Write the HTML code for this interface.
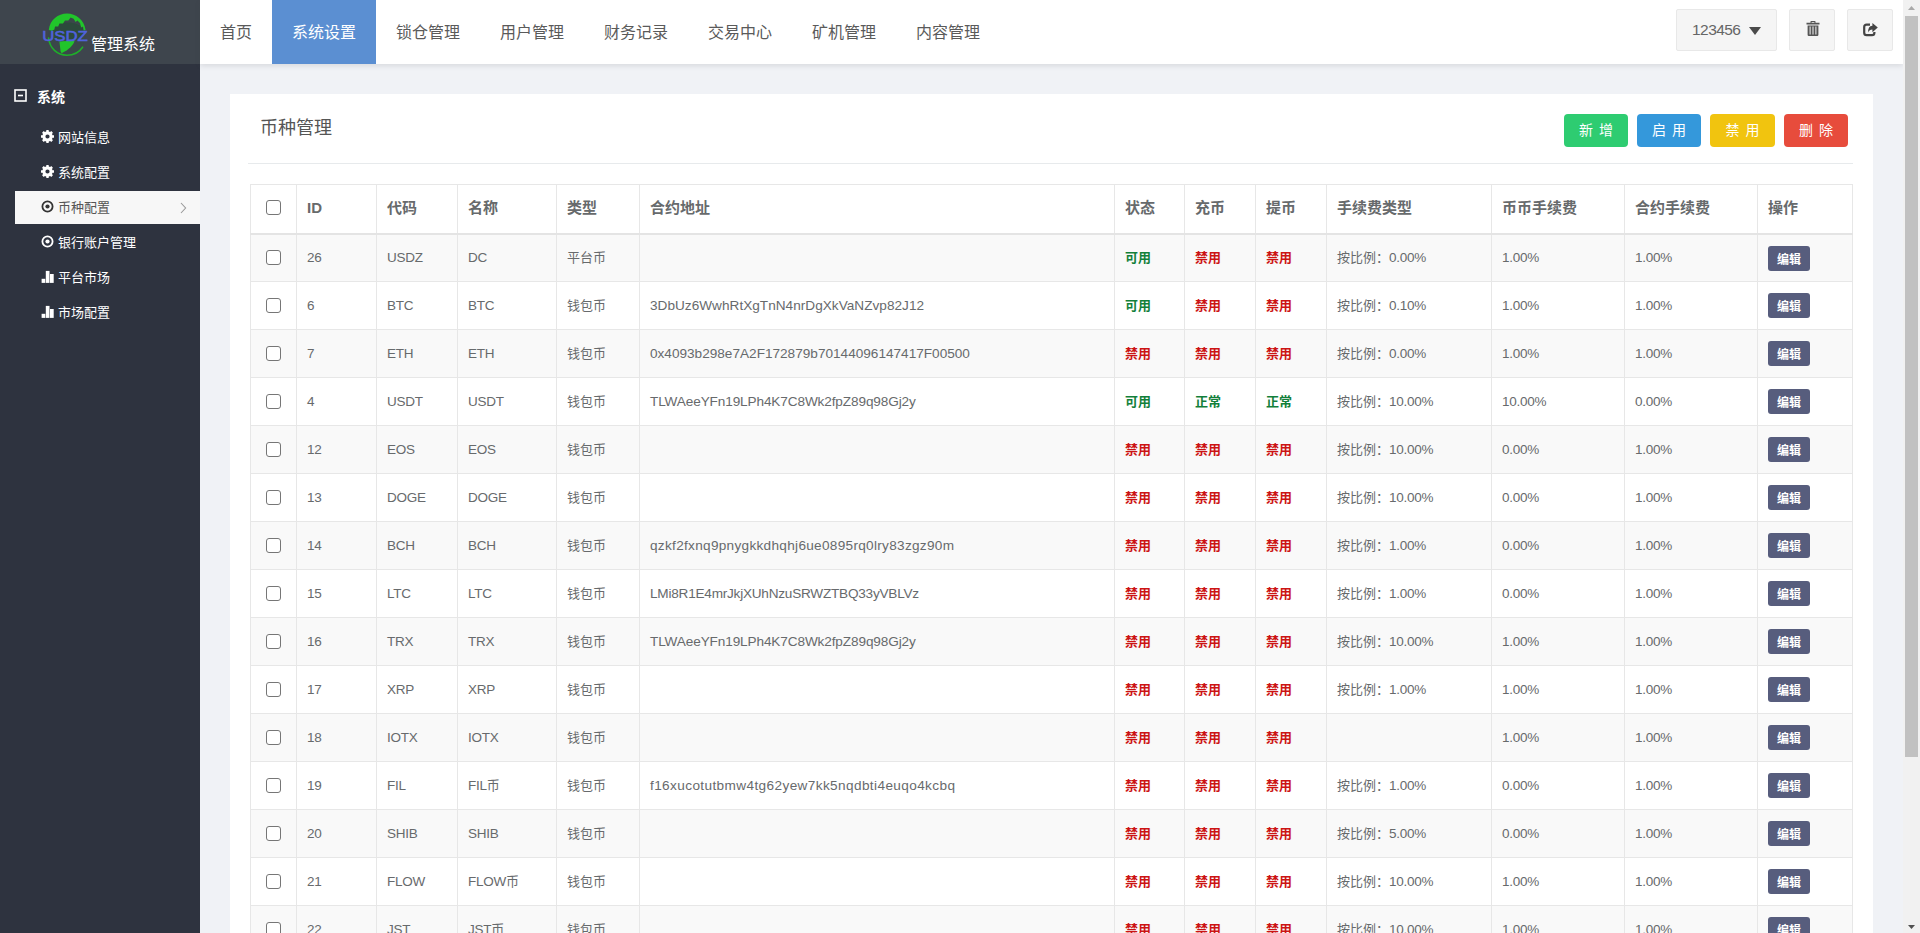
<!DOCTYPE html>
<html lang="zh-CN">
<head>
<meta charset="utf-8">
<title>管理系统</title>
<style>
*{box-sizing:border-box;}
html,body{margin:0;padding:0;}
body{width:1920px;height:933px;overflow:hidden;background:#f0f2f6;font-family:"Liberation Sans","Noto Sans CJK SC",sans-serif;font-size:14px;color:#676a6c;position:relative;}
#side{position:absolute;left:0;top:0;width:200px;height:933px;background:#2e333f;}
#logo{position:absolute;left:0;top:0;width:200px;height:64px;background:#3e454d;}
#logo .t{position:absolute;left:91px;top:33px;font-size:16px;line-height:24px;color:#fff;white-space:nowrap;}
#top{position:absolute;left:200px;top:0;width:1703px;height:64px;background:#fff;box-shadow:0 2px 5px rgba(60,60,70,.13);}
#top .nav{position:absolute;left:0;top:0;height:64px;display:flex;}
#top .nav a{display:block;height:64px;line-height:66px;padding:0 20px;font-size:16px;color:#5a5a5a;text-decoration:none;white-space:nowrap;}
#top .nav a.on{background:#5b8fd2;color:#fff;}
.tb{position:absolute;top:9px;height:42px;background:#f5f5f5;border:1px solid #e8e8e8;border-radius:2px;}
.tb svg{position:absolute;}
#menu-h{position:absolute;left:37px;top:86px;font-size:14px;line-height:22px;font-weight:bold;color:#fff;}
.mi{position:absolute;left:15px;width:185px;height:33px;line-height:33px;color:#fff;font-size:13px;padding-left:43px;white-space:nowrap;}
.mi.on{background:#f7f7f7;color:#555;}
.mi svg{position:absolute;left:26px;top:9px;}
#sb{position:absolute;left:1903px;top:0;width:17px;height:933px;background:#f1f1f1;}
#sb .th{position:absolute;left:2px;top:16px;width:13px;height:741px;background:#c1c1c1;}
#sb svg{position:absolute;left:5px;top:6px;}
#card{position:absolute;left:230px;top:94px;width:1643px;height:860px;background:#fff;}
#card h2{position:absolute;left:30px;top:21px;margin:0;font-size:18px;line-height:26px;font-weight:normal;color:#555;}
.btn{position:absolute;top:20px;height:33px;line-height:33px;border-radius:4px;color:#fff;font-size:14px;text-align:center;white-space:nowrap;word-spacing:2px;}
#hr{position:absolute;left:18px;top:69px;width:1605px;height:1px;background:#e7eaec;}
table{position:absolute;left:20px;top:90px;width:1602px;border-collapse:collapse;table-layout:fixed;}
th,td{border:1px solid #e7e7e7;padding:0 0 0 10px;text-align:left;white-space:nowrap;overflow:hidden;font-size:13px;line-height:18px;}
td i{font-style:normal;font-size:13.5px;letter-spacing:-.25px;}
td i.a{font-size:13.6px;}
th{height:49px;padding-bottom:2px;border-bottom:2px solid #e4e4e4;font-weight:bold;color:#676a6c;font-size:15px;}
td{height:48px;}
tbody tr:nth-child(odd) td{background:#f9f9f9;}
td.ck,th.ck{padding-left:15px;}
.cb{display:inline-block;width:15px;height:15px;border:1px solid #767676;border-radius:3px;background:#fff;vertical-align:middle;position:relative;top:-1px;}
th .cb{top:-1px;}
tbody tr:first-child .ed{top:1px;}
b.g{color:#12803a;} b.r{color:#cc1414;}
.ed{display:inline-block;position:relative;top:0;width:42px;height:25px;line-height:29px;overflow:hidden;vertical-align:middle;background:#575d7d;color:#fff;border-radius:3px;font-size:12px;text-align:center;font-weight:bold;}
</style>
</head>
<body>
<div id="side">
  <div id="logo">
    <svg width="200" height="64" viewBox="0 0 200 64" style="position:absolute;left:0;top:0">
      <ellipse cx="67" cy="35" rx="18.5" ry="20.5" fill="#3a4749"/>
      <path d="M50 30 C54 20 80 20 84 30 L82 40 L52 40Z" fill="#2c4a3c"/>
      <path d="M48.8 30 C50 20 58 13.6 67 13.6 C76 13.6 84 20 85.6 30 L83.6 30.4 L83 26.6 L81.2 27.4 L80 23 L77.4 20.6 L75.6 22 L73.6 18.8 L70.6 17.6 L68.4 20.4 L65 20.6 L63 23.6 L59.4 23.4 L58.2 26.6 L55 26.4 L54.4 29.4 L52 30.8 Z" fill="#21c52b"/>
      <path d="M59.4 41.4 L74.6 40.6 C73.6 45 69 50 61.6 53.2 L60.6 51.6 Z" fill="#21c52b"/>
      <path d="M48.6 38 C49.6 48 57 55.2 67 55.2 C73.6 55.2 79.4 52 82.6 47.2" fill="none" stroke="#1fae2a" stroke-width="1.6" stroke-linecap="round"/>
      <text x="42.2" y="41.2" font-family="Liberation Sans, sans-serif" font-size="15.4" fill="#5062dc" stroke="#5062dc" stroke-width=".6" textLength="45.6" lengthAdjust="spacingAndGlyphs">USDZ</text>
    </svg>
    <div class="t">管理系统</div>
  </div>
  <svg width="13" height="13" style="position:absolute;left:14px;top:89px"><rect x="1" y="1" width="11" height="11" fill="none" stroke="#fff" stroke-width="1.6"/><rect x="4" y="5.7" width="5" height="1.6" fill="#fff"/></svg>
  <div id="menu-h">系统</div>
  <div class="mi" style="top:121px"><svg width="13" height="13" viewBox="0 0 13 13" fill="#fff"><path fill-rule="evenodd" d="M5.17 1.47 L5.37 -0.00 L7.63 -0.00 L7.83 1.47 L9.11 2.00 L10.30 1.10 L11.90 2.70 L11.00 3.89 L11.53 5.17 L13.00 5.37 L13.00 7.63 L11.53 7.83 L11.00 9.11 L11.90 10.30 L10.30 11.90 L9.11 11.00 L7.83 11.53 L7.63 13.00 L5.37 13.00 L5.17 11.53 L3.89 11.00 L2.70 11.90 L1.10 10.30 L2.00 9.11 L1.47 7.83 L-0.00 7.63 L-0.00 5.37 L1.47 5.17 L2.00 3.89 L1.10 2.70 L2.70 1.10 L3.89 2.00Z M4.40 6.50 a2.10 2.10 0 1 0 4.20 0 a2.10 2.10 0 1 0 -4.20 0Z"/></svg>网站信息</div>
  <div class="mi" style="top:156px"><svg width="13" height="13" viewBox="0 0 13 13" fill="#fff"><path fill-rule="evenodd" d="M5.17 1.47 L5.37 -0.00 L7.63 -0.00 L7.83 1.47 L9.11 2.00 L10.30 1.10 L11.90 2.70 L11.00 3.89 L11.53 5.17 L13.00 5.37 L13.00 7.63 L11.53 7.83 L11.00 9.11 L11.90 10.30 L10.30 11.90 L9.11 11.00 L7.83 11.53 L7.63 13.00 L5.37 13.00 L5.17 11.53 L3.89 11.00 L2.70 11.90 L1.10 10.30 L2.00 9.11 L1.47 7.83 L-0.00 7.63 L-0.00 5.37 L1.47 5.17 L2.00 3.89 L1.10 2.70 L2.70 1.10 L3.89 2.00Z M4.40 6.50 a2.10 2.10 0 1 0 4.20 0 a2.10 2.10 0 1 0 -4.20 0Z"/></svg>系统配置</div>
  <div class="mi on" style="top:191px"><svg width="13" height="13" viewBox="0 0 13 13" fill="#333" color="#333"><circle cx="6.5" cy="6.5" r="5.1" fill="none" stroke="currentColor" stroke-width="1.8"/><circle cx="6.5" cy="6.5" r="2.1"/></svg>币种配置<svg width="7" height="12" viewBox="0 0 7 12" style="left:165px;top:11px"><path d="M1 1 L5.6 6 L1 11" fill="none" stroke="#999" stroke-width="1.1"/></svg></div>
  <div class="mi" style="top:226px"><svg width="13" height="13" viewBox="0 0 13 13" fill="#fff" color="#fff"><circle cx="6.5" cy="6.5" r="5.1" fill="none" stroke="currentColor" stroke-width="1.8"/><circle cx="6.5" cy="6.5" r="2.1"/></svg>银行账户管理</div>
  <div class="mi" style="top:261px"><svg width="13" height="13" viewBox="0 0 13 13" fill="#fff"><rect x="0.6" y="8.8" width="3.7" height="4.1"/><rect x="4.8" y="0.9" width="3.7" height="12"/><rect x="9" y="4" width="3.7" height="8.9"/></svg>平台市场</div>
  <div class="mi" style="top:296px"><svg width="13" height="13" viewBox="0 0 13 13" fill="#fff"><rect x="0.6" y="8.8" width="3.7" height="4.1"/><rect x="4.8" y="0.9" width="3.7" height="12"/><rect x="9" y="4" width="3.7" height="8.9"/></svg>市场配置</div>
</div>
<div id="top">
  <div class="nav"><a>首页</a><a class="on">系统设置</a><a>锁仓管理</a><a>用户管理</a><a>财务记录</a><a>交易中心</a><a>矿机管理</a><a>内容管理</a></div>
  <div class="tb" style="left:1476px;width:101px;"><span style="position:absolute;left:15px;top:0;line-height:40px;font-size:15.5px;letter-spacing:-.55px;color:#666">123456</span>
    <svg width="12" height="8" viewBox="0 0 12 8" style="left:72px;top:17px"><path d="M0 0 H12 L6 8Z" fill="#4a4a4a"/></svg></div>
  <div class="tb" style="left:1589px;width:46px;">
    <svg width="14" height="15" viewBox="0 0 14 15" style="left:16px;top:11px" fill="#555"><path d="M4.5 1.8 V0.6 Q4.5 0 5.1 0 H8.9 Q9.5 0 9.5 0.6 V1.8 H13.5 V3.4 H0.5 V1.8 Z M5.6 1.8 H8.4 V1 H5.6Z"/><path fill-rule="evenodd" d="M1.6 4.4 H12.4 V13.8 Q12.4 15 11.2 15 H2.8 Q1.6 15 1.6 13.8Z M3.6 5.6 V13.4 H4.6 V5.6Z M6.5 5.6 V13.4 H7.5 V5.6Z M9.4 5.6 V13.4 H10.4 V5.6Z"/></svg></div>
  <div class="tb" style="left:1647px;width:46px;">
    <svg width="15" height="14" viewBox="0 0 15 14" style="left:15px;top:13px"><path d="M7 1.7 H3.6 Q1.2 1.7 1.2 4.1 V9.8 Q1.2 12.2 3.6 12.2 H9 Q11.4 12.2 11.4 9.8 V9" fill="none" stroke="#444" stroke-width="2.2"/><path d="M9.4 0 L14.8 4.6 L9.4 9.2 V6.5 Q6.2 6.5 5.2 9.6 Q4.8 3 9.4 2.8Z" fill="#444"/></svg></div>
</div>
<div id="card">
  <h2>币种管理</h2>
  <div class="btn" style="left:1334px;width:64px;background:#2ecc71">新 增</div>
  <div class="btn" style="left:1407px;width:64px;background:#3498db">启 用</div>
  <div class="btn" style="left:1480px;width:65px;background:#f1c40f">禁 用</div>
  <div class="btn" style="left:1554px;width:64px;background:#e74c3c">删 除</div>
  <div id="hr"></div>
  <table>
    <colgroup><col style="width:46px"><col style="width:80px"><col style="width:81px"><col style="width:99px"><col style="width:83px"><col style="width:475px"><col style="width:70px"><col style="width:71px"><col style="width:71px"><col style="width:165px"><col style="width:133px"><col style="width:133px"><col style="width:95px"></colgroup>
    <thead><tr><th class="ck"><span class="cb"></span></th><th>ID</th><th>代码</th><th>名称</th><th>类型</th><th>合约地址</th><th>状态</th><th>充币</th><th>提币</th><th>手续费类型</th><th>币币手续费</th><th>合约手续费</th><th>操作</th></tr></thead>
    <tbody>
<tr><td class="ck"><span class="cb"></span></td><td><i>26</i></td><td><i>USDZ</i></td><td><i>DC</i></td><td>平台币</td><td></td><td><b class="g">可用</b></td><td><b class="r">禁用</b></td><td><b class="r">禁用</b></td><td>按比例：<i>0.00%</i></td><td><i>1.00%</i></td><td><i>1.00%</i></td><td><span class="ed">编辑</span></td></tr>
<tr><td class="ck"><span class="cb"></span></td><td><i>6</i></td><td><i>BTC</i></td><td><i>BTC</i></td><td>钱包币</td><td><i class="a" style="letter-spacing:0.025px">3DbUz6WwhRtXgTnN4nrDgXkVaNZvp82J12</i></td><td><b class="g">可用</b></td><td><b class="r">禁用</b></td><td><b class="r">禁用</b></td><td>按比例：<i>0.10%</i></td><td><i>1.00%</i></td><td><i>1.00%</i></td><td><span class="ed">编辑</span></td></tr>
<tr><td class="ck"><span class="cb"></span></td><td><i>7</i></td><td><i>ETH</i></td><td><i>ETH</i></td><td>钱包币</td><td><i class="a" style="letter-spacing:0.003px">0x4093b298e7A2F172879b70144096147417F00500</i></td><td><b class="r">禁用</b></td><td><b class="r">禁用</b></td><td><b class="r">禁用</b></td><td>按比例：<i>0.00%</i></td><td><i>1.00%</i></td><td><i>1.00%</i></td><td><span class="ed">编辑</span></td></tr>
<tr><td class="ck"><span class="cb"></span></td><td><i>4</i></td><td><i>USDT</i></td><td><i>USDT</i></td><td>钱包币</td><td><i class="a" style="letter-spacing:-0.12px">TLWAeeYFn19LPh4K7C8Wk2fpZ89q98Gj2y</i></td><td><b class="g">可用</b></td><td><b class="g">正常</b></td><td><b class="g">正常</b></td><td>按比例：<i>10.00%</i></td><td><i>10.00%</i></td><td><i>0.00%</i></td><td><span class="ed">编辑</span></td></tr>
<tr><td class="ck"><span class="cb"></span></td><td><i>12</i></td><td><i>EOS</i></td><td><i>EOS</i></td><td>钱包币</td><td></td><td><b class="r">禁用</b></td><td><b class="r">禁用</b></td><td><b class="r">禁用</b></td><td>按比例：<i>10.00%</i></td><td><i>0.00%</i></td><td><i>1.00%</i></td><td><span class="ed">编辑</span></td></tr>
<tr><td class="ck"><span class="cb"></span></td><td><i>13</i></td><td><i>DOGE</i></td><td><i>DOGE</i></td><td>钱包币</td><td></td><td><b class="r">禁用</b></td><td><b class="r">禁用</b></td><td><b class="r">禁用</b></td><td>按比例：<i>10.00%</i></td><td><i>0.00%</i></td><td><i>1.00%</i></td><td><span class="ed">编辑</span></td></tr>
<tr><td class="ck"><span class="cb"></span></td><td><i>14</i></td><td><i>BCH</i></td><td><i>BCH</i></td><td>钱包币</td><td><i class="a" style="letter-spacing:0.3px">qzkf2fxnq9pnygkkdhqhj6ue0895rq0lry83zgz90m</i></td><td><b class="r">禁用</b></td><td><b class="r">禁用</b></td><td><b class="r">禁用</b></td><td>按比例：<i>1.00%</i></td><td><i>0.00%</i></td><td><i>1.00%</i></td><td><span class="ed">编辑</span></td></tr>
<tr><td class="ck"><span class="cb"></span></td><td><i>15</i></td><td><i>LTC</i></td><td><i>LTC</i></td><td>钱包币</td><td><i class="a" style="letter-spacing:-0.23px">LMi8R1E4mrJkjXUhNzuSRWZTBQ33yVBLVz</i></td><td><b class="r">禁用</b></td><td><b class="r">禁用</b></td><td><b class="r">禁用</b></td><td>按比例：<i>1.00%</i></td><td><i>0.00%</i></td><td><i>1.00%</i></td><td><span class="ed">编辑</span></td></tr>
<tr><td class="ck"><span class="cb"></span></td><td><i>16</i></td><td><i>TRX</i></td><td><i>TRX</i></td><td>钱包币</td><td><i class="a" style="letter-spacing:-0.12px">TLWAeeYFn19LPh4K7C8Wk2fpZ89q98Gj2y</i></td><td><b class="r">禁用</b></td><td><b class="r">禁用</b></td><td><b class="r">禁用</b></td><td>按比例：<i>10.00%</i></td><td><i>1.00%</i></td><td><i>1.00%</i></td><td><span class="ed">编辑</span></td></tr>
<tr><td class="ck"><span class="cb"></span></td><td><i>17</i></td><td><i>XRP</i></td><td><i>XRP</i></td><td>钱包币</td><td></td><td><b class="r">禁用</b></td><td><b class="r">禁用</b></td><td><b class="r">禁用</b></td><td>按比例：<i>1.00%</i></td><td><i>1.00%</i></td><td><i>1.00%</i></td><td><span class="ed">编辑</span></td></tr>
<tr><td class="ck"><span class="cb"></span></td><td><i>18</i></td><td><i>IOTX</i></td><td><i>IOTX</i></td><td>钱包币</td><td></td><td><b class="r">禁用</b></td><td><b class="r">禁用</b></td><td><b class="r">禁用</b></td><td></td><td><i>1.00%</i></td><td><i>1.00%</i></td><td><span class="ed">编辑</span></td></tr>
<tr><td class="ck"><span class="cb"></span></td><td><i>19</i></td><td><i>FIL</i></td><td><i>FIL</i>币</td><td>钱包币</td><td><i class="a" style="letter-spacing:0.389px">f16xucotutbmw4tg62yew7kk5nqdbti4euqo4kcbq</i></td><td><b class="r">禁用</b></td><td><b class="r">禁用</b></td><td><b class="r">禁用</b></td><td>按比例：<i>1.00%</i></td><td><i>0.00%</i></td><td><i>1.00%</i></td><td><span class="ed">编辑</span></td></tr>
<tr><td class="ck"><span class="cb"></span></td><td><i>20</i></td><td><i>SHIB</i></td><td><i>SHIB</i></td><td>钱包币</td><td></td><td><b class="r">禁用</b></td><td><b class="r">禁用</b></td><td><b class="r">禁用</b></td><td>按比例：<i>5.00%</i></td><td><i>0.00%</i></td><td><i>1.00%</i></td><td><span class="ed">编辑</span></td></tr>
<tr><td class="ck"><span class="cb"></span></td><td><i>21</i></td><td><i>FLOW</i></td><td><i>FLOW</i>币</td><td>钱包币</td><td></td><td><b class="r">禁用</b></td><td><b class="r">禁用</b></td><td><b class="r">禁用</b></td><td>按比例：<i>10.00%</i></td><td><i>1.00%</i></td><td><i>1.00%</i></td><td><span class="ed">编辑</span></td></tr>
<tr><td class="ck"><span class="cb"></span></td><td><i>22</i></td><td><i>JST</i></td><td><i>JST</i>币</td><td>钱包币</td><td></td><td><b class="r">禁用</b></td><td><b class="r">禁用</b></td><td><b class="r">禁用</b></td><td>按比例：<i>10.00%</i></td><td><i>1.00%</i></td><td><i>1.00%</i></td><td><span class="ed">编辑</span></td></tr>    </tbody>
  </table>
</div>
<div id="sb"><svg width="7" height="4" viewBox="0 0 7 4"><path d="M0 4 L3.5 0 L7 4Z" fill="#a9a9a9"/></svg><div class="th"></div><svg width="7" height="4" viewBox="0 0 7 4" style="top:925px"><path d="M0 0 L3.5 4 L7 0Z" fill="#505050"/></svg></div>
</body>
</html>
